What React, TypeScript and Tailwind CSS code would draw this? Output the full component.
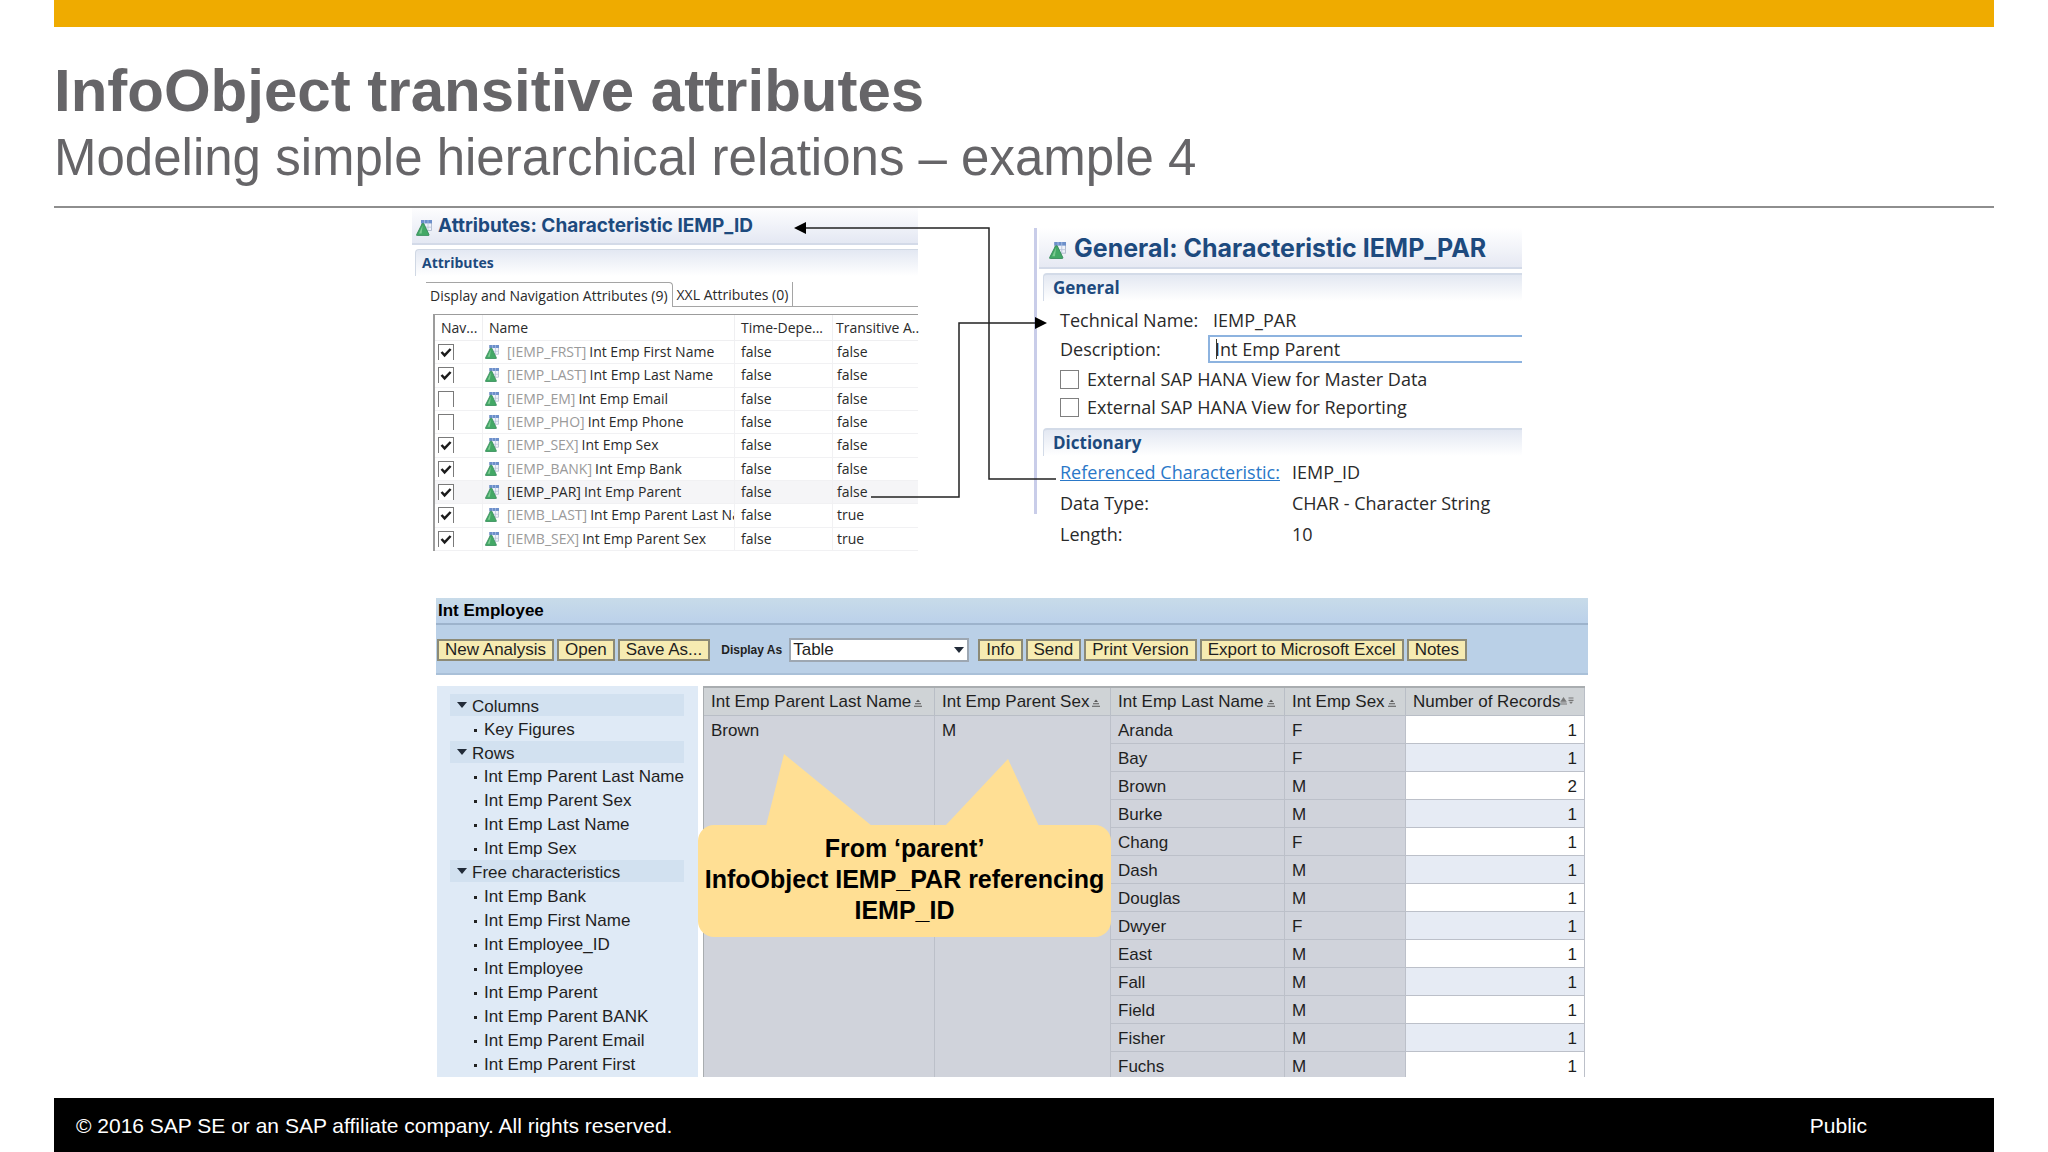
import React from "react";

const attributes = [
  { id: "[IEMP_FRST]", name: "Int Emp First Name", nav: true, time: "false", trans: "false" },
  { id: "[IEMP_LAST]", name: "Int Emp Last Name", nav: true, time: "false", trans: "false" },
  { id: "[IEMP_EM]", name: "Int Emp Email", nav: false, time: "false", trans: "false" },
  { id: "[IEMP_PHO]", name: "Int Emp Phone", nav: false, time: "false", trans: "false" },
  { id: "[IEMP_SEX]", name: "Int Emp Sex", nav: true, time: "false", trans: "false" },
  { id: "[IEMP_BANK]", name: "Int Emp Bank", nav: true, time: "false", trans: "false" },
  { id: "[IEMP_PAR]", name: "Int Emp Parent", nav: true, time: "false", trans: "false", selected: true },
  { id: "[IEMB_LAST]", name: "Int Emp Parent Last Na", nav: true, time: "false", trans: "true" },
  { id: "[IEMB_SEX]", name: "Int Emp Parent Sex", nav: true, time: "false", trans: "true" },
];

const groups = [
  { title: "Columns", items: ["Key Figures"] },
  {
    title: "Rows",
    items: ["Int Emp Parent Last Name", "Int Emp Parent Sex", "Int Emp Last Name", "Int Emp Sex"],
  },
  {
    title: "Free characteristics",
    items: [
      "Int Emp Bank",
      "Int Emp First Name",
      "Int Employee_ID",
      "Int Employee",
      "Int Emp Parent",
      "Int Emp Parent BANK",
      "Int Emp Parent Email",
      "Int Emp Parent First",
    ],
  },
];

const records: [string, string, number][] = [
  ["Aranda", "F", 1],
  ["Bay", "F", 1],
  ["Brown", "M", 2],
  ["Burke", "M", 1],
  ["Chang", "F", 1],
  ["Dash", "M", 1],
  ["Douglas", "M", 1],
  ["Dwyer", "F", 1],
  ["East", "M", 1],
  ["Fall", "M", 1],
  ["Field", "M", 1],
  ["Fisher", "M", 1],
  ["Fuchs", "M", 1],
];

function CharacteristicIcon({ className }: { className: string }) {
  return (
    <svg viewBox="0 0 16 16" className={className} aria-hidden="true">
      <rect x="5.5" y="0.5" width="10" height="10" fill="#eef2fa" stroke="#a9b3c9" strokeWidth="0.8" />
      <rect x="5" y="0" width="11" height="3.4" fill="#6c8fca" />
      <path d="M8.5 0v3.4M12 0v3.4" stroke="#a9c0e6" strokeWidth="0.8" />
      <path d="M12 3.4v7M9 7.2h6.5" stroke="#b9c3d8" strokeWidth="0.8" />
      <path d="M6.2 3.6h1.6L13 14.6c.2.6-.1 1-.8 1H1.3c-.7 0-1-.4-.7-1z" fill="#43a866" stroke="#2f8554" strokeWidth="0.8" />
      <path d="M6.6 5.4 3 13.4h2.6z" fill="#7ccb92" />
    </svg>
  );
}

function NavCheckbox({ checked, label }: { checked: boolean; label: string }) {
  return (
    <span className="grid size-4">
      <input
        type="checkbox"
        defaultChecked={checked}
        aria-label={label}
        className="peer col-start-1 row-start-1 size-4 appearance-none border border-b-0 border-[#7a7a7a] bg-white"
      />
      <svg
        viewBox="0 0 16 16"
        className="pointer-events-none invisible col-start-1 row-start-1 size-4 peer-checked:visible"
        aria-hidden="true"
      >
        <path d="M3.5 8 6.6 11.4 12.6 5" fill="none" stroke="#1b1b1b" strokeWidth="2.5" />
      </svg>
    </span>
  );
}

function AttributesPanel() {
  const head = "border-r border-b border-[#efeff1] text-left font-normal";
  const cell = "border-r border-b border-[#f1f1f3]";
  return (
    <section className="w-[506px] font-['Open_Sans',sans-serif] text-sm text-[#2a2a2a]">
      <h2 className="flex h-[37px] items-center gap-1.5 border-b-2 border-[#d3dae8] bg-linear-to-b from-[#fdfdfe] to-[#e4e8f3] pl-1 font-['Inter',sans-serif] text-[19px] leading-5 font-bold whitespace-nowrap text-[#1d4a7e]">
        <CharacteristicIcon className="mt-1 size-4" />
        Attributes: Characteristic IEMP_ID
      </h2>
      <div className="pl-[3px]">
        <h3 className="mt-1 flex h-[27px] items-center rounded-tl-sm border-t border-l border-[#d0d8e4] bg-linear-to-b from-[#e3e8f2] to-white pl-1.5 font-bold text-[#1d4a7e]">
          Attributes
        </h3>
        <div className="mt-1.5 flex h-[25px] items-stretch pl-[11px]" role="tablist">
          <button role="tab" aria-selected="true" className="rounded-tr-sm border-t border-r border-[#a5a5a5] px-1 pt-px whitespace-nowrap">
            Display and Navigation Attributes (9)
          </button>
          <button role="tab" aria-selected="false" className="border-r border-b border-[#a5a5a5] px-1 pt-0.5 whitespace-nowrap">
            XXL Attributes (0)
          </button>
          <span className="flex-1 border-b border-[#a5a5a5]" />
        </div>
        <div className="mt-[7px] ml-[18px] border-t border-l-2 border-[#9c9c9c]">
          <table className="h-[236px] w-full table-fixed border-separate border-spacing-0">
            <colgroup>
              <col className="w-12" />
              <col className="w-[252px]" />
              <col className="w-[98px]" />
              <col />
            </colgroup>
            <thead>
              <tr className="h-[26px]">
                <th className={head + " pl-1.5"}>Nav...</th>
                <th className={head + " pl-1.5"}>Name</th>
                <th className={head + " pl-1.5"}>Time-Depe...</th>
                <th className="border-b border-[#efeff1] pl-[3px] text-left font-normal whitespace-nowrap">Transitive A..</th>
              </tr>
            </thead>
            <tbody>
              {attributes.map((row) => (
                <tr key={row.id} className={row.selected ? "bg-[#f5f5f7]" : ""}>
                  <td className={cell + " pl-[3px]"}>
                    <NavCheckbox checked={row.nav} label={"Navigation " + row.id} />
                  </td>
                  <td className={cell + " pl-0.5"}>
                    <div className="flex items-center overflow-hidden leading-5 whitespace-nowrap">
                      <CharacteristicIcon className="mr-2 size-3.5 shrink-0" />
                      <span className={row.selected ? "mr-[3px]" : "mr-[3px] text-[#9a9a9a]"}>{row.id}</span>
                      {row.name}
                    </div>
                  </td>
                  <td className={cell + " pl-1.5 leading-5"}>{row.time}</td>
                  <td className="border-b border-[#f1f1f3] pl-1 leading-5">{row.trans}</td>
                </tr>
              ))}
            </tbody>
          </table>
        </div>
      </div>
    </section>
  );
}

function SectionTitle({ children }: { children: React.ReactNode }) {
  return (
    <h3 className="ml-1.5 flex h-7 items-center rounded-tl-sm border-t-2 border-l border-[#d3dbe8] bg-linear-to-b from-[#e3e8f2] to-white pt-px pl-[9px] text-[17px] font-bold text-[#1d4a7e]">
      {children}
    </h3>
  );
}

function GeneralPanel() {
  const box = "size-[19px] appearance-none border border-[#7f7f7f] bg-white checked:bg-[#43a866]";
  return (
    <section className="mt-5 w-[488px] font-['Open_Sans',sans-serif] text-lg text-[#2a2a2a]">
      <div className="h-[286px] border-l-[3px] border-[#c9cde9]">
        <h2 className="ml-0.5 flex h-[41px] items-center gap-2 border-b-2 border-[#d3dae8] bg-linear-to-b from-white to-[#e6e9f3] pl-2.5 font-['Inter',sans-serif] text-[25px] leading-6 font-bold whitespace-nowrap text-[#1d4a7e]">
          <CharacteristicIcon className="mt-1.5 size-[17px]" />
          General: Characteristic IEMP_PAR
        </h2>
        <div className="mt-1">
          <SectionTitle>General</SectionTitle>
        </div>
        <dl className="mt-[5px] flex h-7 items-center pl-[23px]">
          <dt className="w-[153px]">Technical Name:</dt>
          <dd>IEMP_PAR</dd>
        </dl>
        <div className="flex h-[29px] items-center pl-[23px]">
          <label htmlFor="description" className="w-[148px]">
            Description:
          </label>
          <div className="relative flex-1">
            <input
              id="description"
              defaultValue="Int Emp Parent"
              className="h-7 w-full border-2 border-r-0 border-[#8db3df] bg-white pl-[5px] leading-6 outline-none"
            />
            <span className="absolute top-1 left-2 h-5 w-px bg-[#3a3a2a]" />
          </div>
        </div>
        <label className="mt-0.5 flex h-7 items-center gap-2 pl-[23px]">
          <input type="checkbox" className={box} />
          External SAP HANA View for Master Data
        </label>
        <label className="flex h-7 items-center gap-2 pl-[23px]">
          <input type="checkbox" className={box} />
          External SAP HANA View for Reporting
        </label>
        <div className="mt-[7px]">
          <SectionTitle>Dictionary</SectionTitle>
        </div>
        <dl className="grid grid-cols-[232px_1fr] pt-px pl-[23px] leading-[31px]">
          <dt>
            <a href="#iemp-id" className="text-[#2a78c8] underline">
              Referenced Characteristic:
            </a>
          </dt>
          <dd>IEMP_ID</dd>
          <dt>Data Type:</dt>
          <dd>CHAR - Character String</dd>
          <dt>Length:</dt>
          <dd>10</dd>
        </dl>
      </div>
    </section>
  );
}

function Connectors() {
  return (
    <svg
      viewBox="0 0 1176 343"
      className="pointer-events-none absolute top-0 left-0 h-[343px] w-[1176px]"
      fill="none"
      stroke="#222222"
      strokeWidth="1.5"
      aria-hidden="true"
    >
      <path d="M644 271H577V20H392" />
      <path d="M382 20l12-6v12z" fill="#000" stroke="none" />
      <path d="M459 289H547V115H625" />
      <path d="M635 115l-12-6v12z" fill="#000" stroke="none" />
    </svg>
  );
}

function ToolbarButton({ children }: { children: React.ReactNode }) {
  return (
    <button className="h-[22px] border-2 border-[#8c8a76] bg-[#f6ebb2] px-1.5 leading-[18px] whitespace-nowrap">
      {children}
    </button>
  );
}

function SortMark() {
  return (
    <svg viewBox="0 0 8 8" className="ml-[3px] inline size-2" aria-hidden="true">
      <path d="M4 0.5 6 3H2z" fill="#555" />
      <path d="M1 4.8h6M0 7.2h8" stroke="#555" strokeWidth="1.1" />
    </svg>
  );
}

function RecordsSortMark() {
  return (
    <svg viewBox="0 0 14 8" className="mb-1 inline h-2 w-3.5" aria-hidden="true">
      <path d="M3.5 0 6.5 4.5h-6z" fill="#777" />
      <path d="M0.5 5h6M0 7h7" stroke="#777" strokeWidth="1.2" />
      <path d="M8.5 1h5M8.5 3.4h5" stroke="#777" strokeWidth="1.2" />
      <path d="M9 4.8h4L11 7z" fill="#777" />
    </svg>
  );
}

function Navigator() {
  return (
    <nav className="flex w-[261px] flex-col bg-[#dfeaf6] pt-2 pr-3.5 pl-[13px]">
      {groups.map((group, index) => (
        <div key={group.title} className={index === 2 ? "flex flex-1 flex-col" : ""}>
          <button className="flex h-[22px] w-full items-center gap-[5px] bg-[#d2e1f0] pt-[3px] pl-[7px] text-left">
            <svg viewBox="0 0 10 6" className="mb-1 h-1.5 w-2.5" aria-hidden="true">
              <path d="M0 0h10L5 6z" fill="#222b38" />
            </svg>
            {group.title}
          </button>
          <ul className={index === 2 ? "flex flex-1 flex-col pt-[3px]" : "pt-px"}>
            {group.items.map((item) => (
              <li
                key={item}
                className={
                  (index === 2 ? "flex-1" : "h-6 pt-0.5") + " flex items-center gap-[7px] pl-6 leading-6 whitespace-nowrap"
                }
              >
                <span className="size-[3px] bg-[#222]" />
                {item}
              </li>
            ))}
          </ul>
        </div>
      ))}
    </nav>
  );
}

function ResultTable() {
  const head = "border-r border-b border-[#b9bec6] bg-[#cfd3d6] pt-px pl-[7px] text-left font-normal whitespace-nowrap";
  const cell = "border-r border-b border-[#bcc0c9] pt-0.5 pl-[7px]";
  const merged = "border-r border-[#bcc0c9] pt-px pl-[7px] align-top leading-7";
  return (
    <div className="h-[391px] w-[882px] overflow-hidden">
      <table className="w-full table-fixed border-separate border-spacing-0 border-t-2 border-l border-[#a9adb0] bg-[#d0d3db]">
        <colgroup>
          <col className="w-[231px]" />
          <col className="w-44" />
          <col className="w-[174px]" />
          <col className="w-[121px]" />
          <col />
        </colgroup>
        <thead>
          <tr className="h-7">
            {["Int Emp Parent Last Name", "Int Emp Parent Sex", "Int Emp Last Name", "Int Emp Sex"].map((title) => (
              <th key={title} className={head}>
                {title}
                <SortMark />
              </th>
            ))}
            <th className={head}>
              Number of Records
              <RecordsSortMark />
            </th>
          </tr>
        </thead>
        <tbody>
          {records.map(([name, sex, count], index) => (
            <tr key={name} className="h-7">
              {index === 0 && (
                <>
                  <td rowSpan={records.length} className={merged}>
                    Brown
                  </td>
                  <td rowSpan={records.length} className={merged}>
                    M
                  </td>
                </>
              )}
              <td className={cell}>{name}</td>
              <td className={cell}>{sex}</td>
              <td className={cell + " pr-[7px] text-right " + (index % 2 ? "bg-[#e6ebf4]" : "bg-white")}>{count}</td>
            </tr>
          ))}
        </tbody>
      </table>
    </div>
  );
}

function Callout() {
  return (
    <aside className="absolute top-[156px] left-[262px] w-[413px]">
      <svg viewBox="0 0 413 72" className="block h-[72px] w-full" aria-hidden="true">
        <path d="M68 72 86 0 174 72zM247 72 310 5 341 72z" fill="#ffdf94" />
      </svg>
      <p className="-mt-px flex h-[112px] flex-col items-center rounded-2xl bg-[#ffdf94] pt-2 text-center text-[25px] leading-[31px] font-bold whitespace-nowrap text-black">
        <span>From ‘parent’</span>
        <span>InfoObject IEMP_PAR referencing</span>
        <span>IEMP_ID</span>
      </p>
    </aside>
  );
}

function AnalysisPanel() {
  return (
    <section className="relative mt-[47px] ml-6 text-[17px] leading-5 text-[#1f1f1f]">
      <header>
        <h2 className="h-[25px] bg-linear-to-b from-[#c8dbe9] to-[#bbd1ea] pt-px pl-0.5 leading-6 font-bold text-black">
          Int Employee
        </h2>
        <div className="flex h-[52px] items-center gap-[3px] border-t-2 border-b-2 border-t-[#9db3cc] border-b-[#a9c0d8] bg-[#bad0e7] pt-0.5 pl-px">
          <ToolbarButton>New Analysis</ToolbarButton>
          <ToolbarButton>Open</ToolbarButton>
          <ToolbarButton>Save As...</ToolbarButton>
          <label htmlFor="display-as" className="ml-2 text-xs font-bold">
            Display As
          </label>
          <span className="relative mr-1.5 ml-1 flex items-center">
            <select
              id="display-as"
              className="h-6 w-[180px] appearance-none border-2 border-[#9da7b2] bg-white pl-0.5 leading-5"
              defaultValue="Table"
            >
              <option>Table</option>
            </select>
            <svg viewBox="0 0 10 6" className="pointer-events-none absolute right-[5px] h-1.5 w-2.5" aria-hidden="true">
              <path d="M0 0h10L5 6z" fill="#222b38" />
            </svg>
          </span>
          <ToolbarButton>Info</ToolbarButton>
          <ToolbarButton>Send</ToolbarButton>
          <ToolbarButton>Print Version</ToolbarButton>
          <ToolbarButton>Export to Microsoft Excel</ToolbarButton>
          <ToolbarButton>Notes</ToolbarButton>
        </div>
      </header>
      <div className="mt-[11px] flex items-stretch gap-[5px] pl-px">
        <Navigator />
        <ResultTable />
      </div>
      <Callout />
    </section>
  );
}

export default function App() {
  return (
    <div className="flex min-h-screen flex-col bg-white px-[54px] font-['Liberation_Sans',Arial,sans-serif]">
      <div className="h-[27px] bg-[#efab00]" />
      <header className="border-b-2 border-[#8e8e8e] pt-[34px] pb-[18px] text-[#666568]">
        <h1 className="text-[60px] leading-[60px] font-bold">InfoObject transitive attributes</h1>
        <p className="mt-[7px] text-[51px] leading-[60px]">Modeling simple hierarchical relations – example 4</p>
      </header>
      <main className="flex flex-1 justify-center pr-12">
        <div className="w-[1176px]">
          <div className="relative flex gap-[116px]">
            <AttributesPanel />
            <GeneralPanel />
            <Connectors />
          </div>
          <AnalysisPanel />
        </div>
      </main>
      <footer className="flex h-[54px] items-center justify-between bg-black pt-0.5 pr-[127px] pl-[22px] text-[21px] text-white">
        <span>© 2016 SAP SE or an SAP affiliate company. All rights reserved.</span>
        <span>Public</span>
      </footer>
    </div>
  );
}
